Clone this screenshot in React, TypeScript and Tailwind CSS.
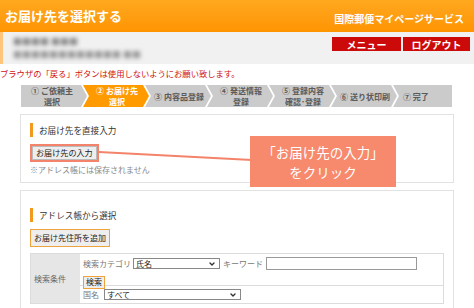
import { ChevronDown } from 'lucide-react';

const steps = [
  ['① ご依頼主', '選択'],
  ['② お届け先', '選択'],
  ['③ 内容品登録'],
  ['④ 発送情報', '登録'],
  ['⑤ 登録内容', '確認･登録'],
  ['⑥ 送り状印刷'],
  ['⑦ 完了'],
];

function StepBar() {
  return (
    <div className="ml-[21px] mt-[6px] flex h-[22px] w-[431px]">
      {steps.map((lines, i) => {
        const active = i === 1;
        const first = i === 0;
        const last = i === steps.length - 1;
        const shape = first
          ? '[clip-path:polygon(0_0,60px_0,66px_50%,60px_100%,0_100%)]'
          : last
            ? '[clip-path:polygon(0_0,100%_0,100%_100%,0_100%,6px_50%)]'
            : '[clip-path:polygon(0_0,60px_0,66px_50%,60px_100%,0_100%,6px_50%)]';
        return (
          <div
            key={i}
            className={`flex h-full flex-col items-center justify-center text-[8px] font-bold ${
              last ? 'flex-1 items-start pl-[10px]' : 'w-[66px] shrink-0 pr-[4px]'
            } ${first ? '' : '-ml-[4px] pl-[6px]'} ${shape} ${
              active ? 'bg-[#ff9a00] text-white' : 'bg-[#cbcbcb] text-[#5a5a5a]'
            }`}
          >
            {lines.map((l) => (
              <span key={l} className="block h-[11px] whitespace-nowrap leading-[11px]">{l}</span>
            ))}
          </div>
        );
      })}
    </div>
  );
}

function SectionTitle({ children }: { children: string }) {
  return (
    <div className="flex h-[14px] items-center gap-[6px]">
      <span className="h-[14px] w-[3px] bg-[#f39a1e]" />
      <span className="text-[8.6px] text-[#333]">{children}</span>
    </div>
  );
}

function Select({ value, width }: { value: string; width: string }) {
  return (
    <div className={`flex h-[11px] items-center justify-between border border-[#888] bg-white pl-[2px] pr-[3px] ${width}`}>
      <span className="text-[8px] leading-none text-[#222]">{value}</span>
      <ChevronDown size={8} strokeWidth={4} className="text-[#333]" />
    </div>
  );
}

export default function App() {
  return (
    <div className="relative h-[308px] w-[474px] overflow-hidden bg-white font-['Noto_Sans_CJK_JP',sans-serif]">
      {/* header */}
      <div className="flex h-[32px] items-center justify-between bg-gradient-to-b from-[#ffa81e] to-[#ff9400] pl-[5px] pr-[10px]">
        <span className="text-[13px] font-bold text-white">お届け先を選択する</span>
        <span className="pt-[5px] text-[10px] font-bold text-white">国際郵便マイページサービス</span>
      </div>

      {/* user band */}
      <div className="flex h-[32px] bg-[#f1f1f1]">
        <div className="w-[3px] bg-[#ffc57d]" />
        <div className="flex flex-col justify-center pl-[10px] blur-[2px]">
          <span className="text-[9px] font-bold leading-[13px] text-[#8a8a8a]">■■■■ ■■■</span>
          <span className="text-[9px] font-bold leading-[13px] text-[#999]">■■■■■■■■■■■■ ■■</span>
        </div>
        <div className="ml-auto flex gap-[2px] pr-[4px] pt-[5px]">
          <div className="flex h-[14px] w-[69px] items-center justify-center bg-[#cc0a0a] text-[10px] font-bold text-white">
            メニュー
          </div>
          <div className="flex h-[14px] w-[67px] items-center justify-center bg-[#cc0a0a] text-[10px] font-bold text-white">
            ログアウト
          </div>
        </div>
      </div>

      {/* warning */}
      <div className="mt-[3px] h-[12px] whitespace-nowrap text-[8.3px] leading-[12px] text-[#d01010]">
        ブラウザの「戻る」ボタンは使用しないようにお願い致します。
      </div>

      <StepBar />

      {/* direct input panel */}
      <div className="mx-[20px] mt-[7px] h-[69px] border border-[#e2e2e2] px-[9px] pt-[8px]">
        <SectionTitle>お届け先を直接入力</SectionTitle>
        <div className="mt-[5px] inline-flex border-2 border-[#f3846b]">
          <div className="flex h-[14px] items-center border border-[#bbb] bg-[#eeeeee] px-[3px] text-[8.1px] text-[#222]">
            お届け先の入力
          </div>
        </div>
        <div className="mt-[2px] text-[8px] leading-[12px] text-[#888]">※アドレス帳には保存されません</div>
      </div>

      {/* address book panel */}
      <div className="mx-[20px] mt-[7px] h-[130px] border border-[#e2e2e2] px-[9px] pt-[17px]">
        <SectionTitle>アドレス帳から選択</SectionTitle>
        <div className="mt-[6px] inline-flex h-[18px] items-center border-[1.5px] border-[#f0a33c] bg-[#eeeeee] px-[3px] text-[8px] text-[#222]">
          お届け先住所を追加
        </div>
        <div className="mt-[6px] flex w-[414px] border border-[#dcdcdc] leading-none">
          <div className="flex w-[49px] items-center bg-[#e6e6e6] pl-[3px] text-[8px] text-[#666]">検索条件</div>
          <div className="flex-1">
            <div className="h-[32px] border-b border-[#dcdcdc] pl-[3px] pt-[3px]">
              <div className="flex h-[13px] items-center gap-[2px] text-[8px] text-[#777]">
                <span>検索カテゴリ</span>
                <Select value="氏名" width="w-[87px]" />
                <span className="ml-[1px]">キーワード</span>
                <div className="ml-[1px] h-[13px] w-[151px] border border-[#999] bg-white" />
              </div>
              <div className="inline-flex h-[13px] items-center border-[1.5px] border-[#f0a33c] bg-[#eeeeee] px-[2px] text-[8px] text-[#222]">
                検索
              </div>
            </div>
            <div className="flex h-[17px] items-center gap-[5px] pl-[3px] text-[8px] text-[#777]">
              <span>国名</span>
              <Select value="すべて" width="w-[137px]" />
            </div>
          </div>
        </div>
      </div>

      {/* callout */}
      <svg className="absolute left-0 top-0" width="474" height="308">
        <line x1="99" y1="152" x2="252" y2="160" stroke="#f3846b" strokeWidth="2" />
      </svg>
      <div className="absolute left-[250px] top-[136px] flex h-[51px] w-[146px] flex-col items-center justify-center bg-[#f7896c] text-[13.5px] leading-[20px] text-white">
        <span>「お届け先の入力」</span>
        <span>をクリック</span>
      </div>
    </div>
  );
}
